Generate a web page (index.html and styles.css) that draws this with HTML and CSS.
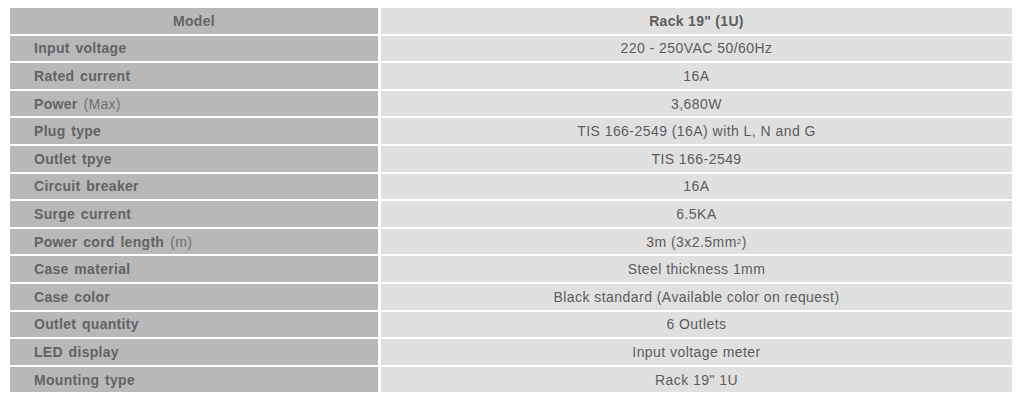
FILE: index.html
```html
<!DOCTYPE html>
<html lang="en">
<head>
<meta charset="utf-8">
<title>Specification</title>
<link rel="stylesheet" href="styles.css">
</head>
<body>
<div class="spec">
  <div class="cell label head">Model</div><div class="cell value head">Rack 19" (1U)</div>
  <div class="cell label">Input voltage</div><div class="cell value">220 - 250VAC 50/60Hz</div>
  <div class="cell label">Rated current</div><div class="cell value">16A</div>
  <div class="cell label">Power <span class="unit">(Max)</span></div><div class="cell value">3,680W</div>
  <div class="cell label">Plug type</div><div class="cell value">TIS 166-2549 (16A) with L, N and G</div>
  <div class="cell label">Outlet tpye</div><div class="cell value">TIS 166-2549</div>
  <div class="cell label">Circuit breaker</div><div class="cell value">16A</div>
  <div class="cell label">Surge current</div><div class="cell value">6.5KA</div>
  <div class="cell label">Power cord length <span class="unit">(m)</span></div><div class="cell value">3m (3x2.5mm<sup>2</sup>)</div>
  <div class="cell label">Case material</div><div class="cell value">Steel thickness 1mm</div>
  <div class="cell label">Case color</div><div class="cell value">Black standard (Available color on request)</div>
  <div class="cell label">Outlet quantity</div><div class="cell value">6 Outlets</div>
  <div class="cell label">LED display</div><div class="cell value">Input voltage meter</div>
  <div class="cell label">Mounting type</div><div class="cell value">Rack 19" 1U</div>
</div>
</body>
</html>
```
FILE: styles.css
```css
html, body {
  margin: 0;
  padding: 0;
  background: #ffffff;
}
body {
  font-family: "Liberation Sans", Arial, sans-serif;
}
.spec {
  display: grid;
  grid-template-columns: 368px 631px;
  grid-auto-rows: 25.6px;
  column-gap: 3px;
  row-gap: 2px;
  padding: 8px 0 0 10px;
}
.cell {
  display: flex;
  align-items: center;
  white-space: nowrap;
}
.label {
  background: #b8b8b9;
  color: #636364;
  font-weight: bold;
  font-size: 14px;
  letter-spacing: 0.3px;
  word-spacing: 1.5px;
  padding-left: 24px;
}
.value {
  background: #e0e0e0;
  color: #5c5c5c;
  font-size: 14px;
  letter-spacing: 0.45px;
  justify-content: center;
}
.label.head {
  justify-content: center;
  padding-left: 0;
}
.value.head {
  font-weight: bold;
  color: #5e5e5e;
  letter-spacing: 0.3px;
}
.unit {
  font-weight: normal;
  color: #707071;
  margin-left: 6px;
}
sup {
  font-size: 8px;
  line-height: 0;
  vertical-align: 6px;
}
```
